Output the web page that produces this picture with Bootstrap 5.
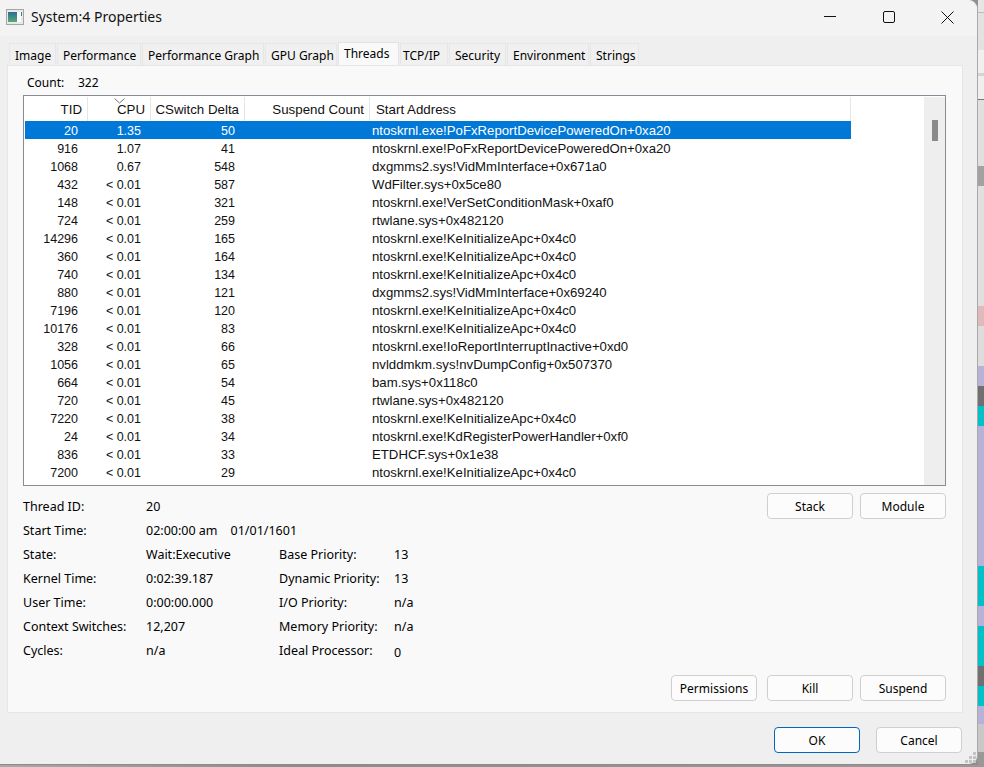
<!DOCTYPE html>
<html lang="en">
<head>
<meta charset="utf-8">
<title>System:4 Properties</title>
<link href="https://cdn.jsdelivr.net/npm/bootstrap@5.3.0/dist/css/bootstrap.min.css" rel="stylesheet">
<style>
html,body{margin:0;height:767px;overflow:hidden;background:#8f8f8f}
body{font-family:"Noto Sans","Liberation Sans",sans-serif;font-size:12px;line-height:16px;color:#000}
.scene{width:984px;height:767px}
.win{width:978px;height:765px;background:#efefef;border-right:1px solid #a9a9a9;border-bottom:1px solid #8c8c8c;border-radius:0 9px 9px 0}
.strip{width:6px;height:765px;background:linear-gradient(to bottom,#e6e6e6 0 12px,#bbb 12px 13px,#e2e2e2 13px 50px,#f0f0f0 50px 73px,#d4d4d4 73px 76px,#efefef 76px 99px,#777 99px 100px,#e0e0e0 100px 166px,#a2a2a2 166px 186px,#e0e0e0 186px 306px,#e0b9b9 306px 326px,#ddd 326px 366px,#b7b3d8 366px 386px,#707070 386px 406px,#00c0c8 406px 426px,#b7b3d8 426px 566px,#00c0c8 566px 606px,#b7b3d8 606px 626px,#00c0c8 626px 666px,#707070 666px 686px,#00c0c8 686px 706px,#b7b3d8 706px 724px,#c8c8c8 724px 752px,#999 752px 765px)}
.titlebar{height:36px;flex:none;background:#f3f3f3;border-radius:0 9px 0 0;padding:0 0 2px 6px}
.ttl{font-size:14px;margin-left:7px;color:#111}
.wbtn{width:59px;height:34px;padding:0;border:0;background:none;display:flex;align-items:center;justify-content:center}
.wbtns{margin-right:0}
.tabs{padding:7px 0 0 9px;height:29px;flex:none;border:0;flex-wrap:nowrap;gap:1px;position:relative;z-index:1}
.tabs .nav-link{height:22px;margin:0;padding:0 0 0 5px;border:1px solid #e6e6e6;border-bottom:0;border-radius:0;background:#f0f0f0;color:#000;font-size:12px;line-height:23px;text-align:left;white-space:nowrap}
.tabs .nav-link.active{height:23px;margin-top:-1px;background:#f9f9f9;border-color:#e3e3e3;line-height:21px}
.tw1{width:47px}.tw2{width:84px}.tw3{width:122px}.tw4{width:72px}.tw5{width:61px}.tabs .nav-link.tw6{width:48px;padding-left:2px}.tw7{width:57px}.tw8{width:82px}.tw9{width:49px}
.panel{margin-left:7px;width:956px;height:648px;flex:none;background:#f9f9f9;border:1px solid #e6e6e6;padding:0 16px 0 15px}
.countrow{height:29px;padding-top:9px}
.countrow .cl{width:51px}
.listbox{height:391px;width:923px;background:#fff;border:1px solid #8b8b95;padding-top:1px}
.listarea{width:826px;padding-left:1px}
.lst{table-layout:fixed;width:826px;border-collapse:separate;border-spacing:0;font-family:"Liberation Sans",Arial,sans-serif;font-size:12.5px}
.lst th{height:24px;font-size:13.3px;font-weight:400;padding:1px 5px 0 0;text-align:right;border-right:1px solid #e5e5e5;color:#111;position:relative}
.lst th:last-child{text-align:left;padding:1px 0 0 6px}
.lst td{height:18px;padding:2px 10px 0 0;text-align:right;line-height:16px;color:#111;white-space:nowrap}
.lst td:last-child{text-align:left;padding:2px 0 0 2px;font-size:13.2px}
.lst tr.sel td{background:#0078d7;color:#fff}
.sortm{position:absolute;left:26px;top:1px}
.sbar{width:21px;margin-left:auto;background:#eee;margin-right:0;display:flex;justify-content:center;padding-top:23px}
.sthumb{width:6px;height:21px;background:#8a8a8a}
.info{height:168px;margin-top:7px}
.grid1{display:grid;grid-template-columns:123px 133px 115px auto;grid-auto-rows:24px;align-items:center;padding-top:2px;font-size:12.5px}
.span3{grid-column:2/5}
.wb{width:86px;height:26px;padding:2px 0 0;font-size:12px;line-height:20px;color:#000;background:#fcfcfc;border:1px solid #cfcfcf;border-radius:4px}
.wb:hover{background:#fcfcfc;color:#000;border-color:#cfcfcf}
.bgap{gap:7px}
.act{margin-top:14px}
.act .wb:first-child{margin-right:3px}
.foot{height:51px;flex:none;padding:14px 15px 0 0;gap:16px}
.wb.prim{border-color:#0067c0}
.zero{position:relative;top:2px}
.grip{position:absolute;right:0;bottom:0}
.bottomstrip{height:2px;background:linear-gradient(to right,#a8a8a8,#8c8c8c 30%,#999)}
</style>
</head>
<body>
<div class="scene">
<div class="d-flex">
<div class="win d-flex flex-column position-relative">
  <div class="titlebar d-flex align-items-center">
    <svg width="18" height="16" viewBox="0 0 18 16"><rect x=".5" y=".5" width="17" height="15" fill="#e9e9e9" stroke="#a5a5a5"/><defs><linearGradient id="gr" x1="0" y1="0" x2="0" y2="1"><stop offset="0" stop-color="#2a6f92"/><stop offset="1" stop-color="#5aa878"/></linearGradient></defs><rect x="2" y="3" width="9" height="10" fill="url(#gr)"/><rect x="11" y="3" width="4" height="10" fill="#fbfbfb"/><rect x="15" y="3" width="1" height="4" fill="#3d7d8c"/></svg>
    <span class="ttl">System:4 Properties</span>
    <div class="d-flex ms-auto wbtns">
      <button class="wbtn" type="button" aria-label="Minimize"><svg width="12" height="12" viewBox="0 0 12 12"><path d="M0 5.5H12" stroke="#111" stroke-width="1"/></svg></button>
      <button class="wbtn" type="button" aria-label="Maximize"><svg width="12" height="12" viewBox="0 0 12 12"><rect x=".5" y=".5" width="11" height="11" rx="1.5" fill="none" stroke="#111"/></svg></button>
      <button class="wbtn" type="button" aria-label="Close"><svg width="13" height="13" viewBox="0 0 13 13"><path d="M.5.5 12.5 12.5M12.5.5.5 12.5" stroke="#111"/></svg></button>
    </div>
  </div>
  <ul class="nav nav-tabs tabs">
    <li class="nav-item"><a class="nav-link tw1" href="#">Image</a></li>
    <li class="nav-item"><a class="nav-link tw2" href="#">Performance</a></li>
    <li class="nav-item"><a class="nav-link tw3" href="#">Performance Graph</a></li>
    <li class="nav-item"><a class="nav-link tw4" href="#">GPU Graph</a></li>
    <li class="nav-item"><a class="nav-link tw5 active" href="#">Threads</a></li>
    <li class="nav-item"><a class="nav-link tw6" href="#">TCP/IP</a></li>
    <li class="nav-item"><a class="nav-link tw7" href="#">Security</a></li>
    <li class="nav-item"><a class="nav-link tw8" href="#">Environment</a></li>
    <li class="nav-item"><a class="nav-link tw9" href="#">Strings</a></li>
  </ul>
  <div class="panel">
    <div class="countrow d-flex ps-1"><span class="cl">Count:</span><span>322</span></div>
    <div class="listbox d-flex">
      <div class="listarea">
        <table class="lst">
          <colgroup><col style="width:63px"><col style="width:63px"><col style="width:94px"><col style="width:125px"><col></colgroup>
          <thead><tr><th>TID</th><th><svg class="sortm" width="11" height="6" viewBox="0 0 11 6"><path d="M.5.5 5.5 5 10.5.5" fill="none" stroke="#777"/></svg>CPU</th><th>CSwitch Delta</th><th>Suspend Count</th><th>Start Address</th></tr></thead>
          <tbody>
            <tr class="sel"><td>20</td><td>1.35</td><td>50</td><td></td><td>ntoskrnl.exe!PoFxReportDevicePoweredOn+0xa20</td></tr>
            <tr><td>916</td><td>1.07</td><td>41</td><td></td><td>ntoskrnl.exe!PoFxReportDevicePoweredOn+0xa20</td></tr>
            <tr><td>1068</td><td>0.67</td><td>548</td><td></td><td>dxgmms2.sys!VidMmInterface+0x671a0</td></tr>
            <tr><td>432</td><td>&lt; 0.01</td><td>587</td><td></td><td>WdFilter.sys+0x5ce80</td></tr>
            <tr><td>148</td><td>&lt; 0.01</td><td>321</td><td></td><td>ntoskrnl.exe!VerSetConditionMask+0xaf0</td></tr>
            <tr><td>724</td><td>&lt; 0.01</td><td>259</td><td></td><td>rtwlane.sys+0x482120</td></tr>
            <tr><td>14296</td><td>&lt; 0.01</td><td>165</td><td></td><td>ntoskrnl.exe!KeInitializeApc+0x4c0</td></tr>
            <tr><td>360</td><td>&lt; 0.01</td><td>164</td><td></td><td>ntoskrnl.exe!KeInitializeApc+0x4c0</td></tr>
            <tr><td>740</td><td>&lt; 0.01</td><td>134</td><td></td><td>ntoskrnl.exe!KeInitializeApc+0x4c0</td></tr>
            <tr><td>880</td><td>&lt; 0.01</td><td>121</td><td></td><td>dxgmms2.sys!VidMmInterface+0x69240</td></tr>
            <tr><td>7196</td><td>&lt; 0.01</td><td>120</td><td></td><td>ntoskrnl.exe!KeInitializeApc+0x4c0</td></tr>
            <tr><td>10176</td><td>&lt; 0.01</td><td>83</td><td></td><td>ntoskrnl.exe!KeInitializeApc+0x4c0</td></tr>
            <tr><td>328</td><td>&lt; 0.01</td><td>66</td><td></td><td>ntoskrnl.exe!IoReportInterruptInactive+0xd0</td></tr>
            <tr><td>1056</td><td>&lt; 0.01</td><td>65</td><td></td><td>nvlddmkm.sys!nvDumpConfig+0x507370</td></tr>
            <tr><td>664</td><td>&lt; 0.01</td><td>54</td><td></td><td>bam.sys+0x118c0</td></tr>
            <tr><td>720</td><td>&lt; 0.01</td><td>45</td><td></td><td>rtwlane.sys+0x482120</td></tr>
            <tr><td>7220</td><td>&lt; 0.01</td><td>38</td><td></td><td>ntoskrnl.exe!KeInitializeApc+0x4c0</td></tr>
            <tr><td>24</td><td>&lt; 0.01</td><td>34</td><td></td><td>ntoskrnl.exe!KdRegisterPowerHandler+0xf0</td></tr>
            <tr><td>836</td><td>&lt; 0.01</td><td>33</td><td></td><td>ETDHCF.sys+0x1e38</td></tr>
            <tr><td>7200</td><td>&lt; 0.01</td><td>29</td><td></td><td>ntoskrnl.exe!KeInitializeApc+0x4c0</td></tr>
          </tbody>
        </table>
      </div>
      <div class="sbar"><div class="sthumb"></div></div>
    </div>
    <div class="info d-flex justify-content-between align-items-start">
      <div class="grid1">
        <span>Thread ID:</span><span class="span3">20</span>
        <span>Start Time:</span><span class="span3">02:00:00 am&nbsp;&nbsp;&nbsp; 01/01/1601</span>
        <span>State:</span><span>Wait:Executive</span><span>Base Priority:</span><span>13</span>
        <span>Kernel Time:</span><span>0:02:39.187</span><span>Dynamic Priority:</span><span>13</span>
        <span>User Time:</span><span>0:00:00.000</span><span>I/O Priority:</span><span>n/a</span>
        <span>Context Switches:</span><span>12,207</span><span>Memory Priority:</span><span>n/a</span>
        <span>Cycles:</span><span>n/a</span><span>Ideal Processor:</span><span class="zero">0</span>
      </div>
      <div class="d-flex bgap"><button class="btn wb" type="button">Stack</button><button class="btn wb" type="button">Module</button></div>
    </div>
    <div class="d-flex justify-content-end bgap act">
      <button class="btn wb" type="button">Permissions</button><button class="btn wb" type="button">Kill</button><button class="btn wb" type="button">Suspend</button>
    </div>
  </div>
  <div class="foot d-flex justify-content-end">
    <button class="btn wb prim" type="button">OK</button><button class="btn wb" type="button">Cancel</button>
  </div>
  <svg class="grip" width="13" height="12" viewBox="0 0 13 12" fill="#c4c4c4"><rect x="9" y="0" width="3" height="3"/><rect x="5" y="4" width="3" height="3"/><rect x="9" y="4" width="3" height="3"/><rect x="1" y="8" width="3" height="3"/><rect x="5" y="8" width="3" height="3"/><rect x="9" y="8" width="3" height="3"/></svg>
</div>
<div class="strip"></div>
</div>
<div class="bottomstrip"></div>
</div>
<script src="https://cdn.jsdelivr.net/npm/bootstrap@5.3.0/dist/js/bootstrap.bundle.min.js"></script>
</body>
</html>
